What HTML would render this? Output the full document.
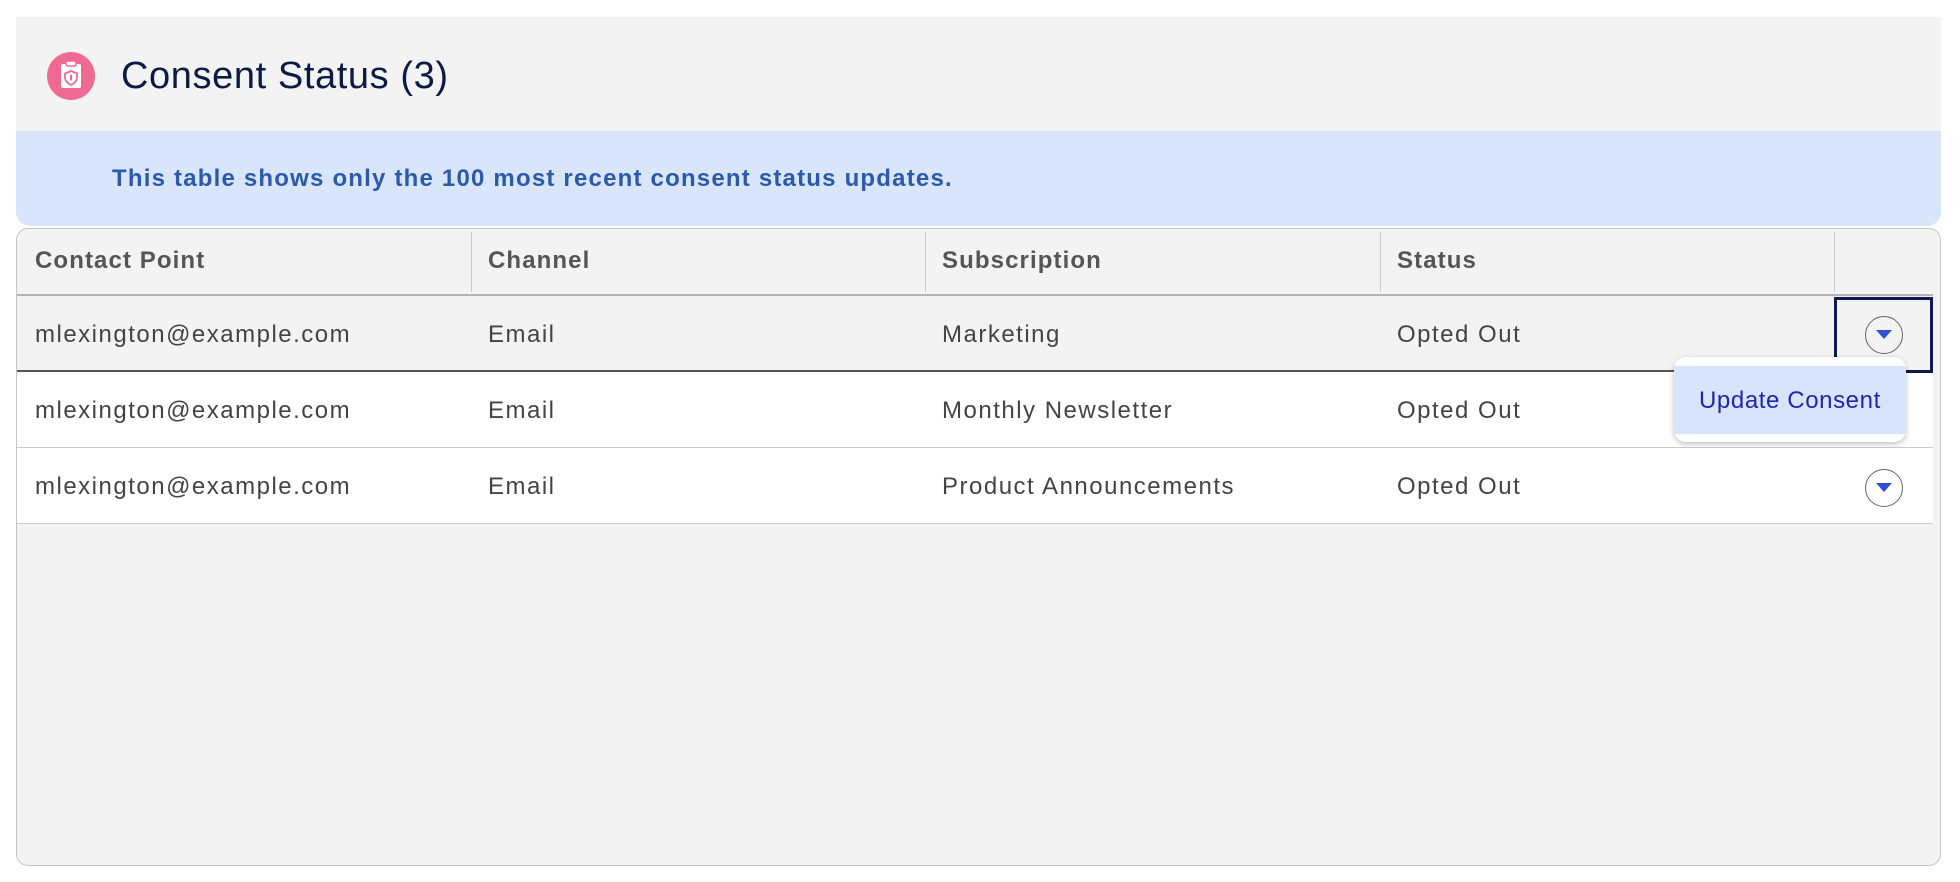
<!DOCTYPE html>
<html><head><meta charset="utf-8"><style>
*{margin:0;padding:0;box-sizing:border-box}
body{width:1960px;height:882px;background:#fff;font-family:"Liberation Sans",sans-serif;position:relative;overflow:hidden}
.abs{position:absolute}
.hdr{left:16px;top:17px;width:1925px;height:114px;background:#f3f3f3}
.title{left:121px;top:52px;font-size:38px;letter-spacing:0.6px;color:#0b1b45;line-height:48px}
.banner{left:16px;top:131px;width:1925px;height:95px;background:#d9e5fb;border-radius:0 0 14px 14px}
.btxt{left:112px;top:165px;font-size:24px;letter-spacing:1.2px;font-weight:bold;color:#2b5aab}
.tbl{left:16px;top:228px;width:1925px;height:638px;background:#f3f3f3;border:1.5px solid #c4c4c4;border-radius:12px}
.th{top:247px;font-size:24px;letter-spacing:1.1px;font-weight:bold;color:#555}
.sep{top:232px;width:1px;height:60px;background:#c9c9c9}
.row{left:17px;width:1916px;height:76px}
.td{font-size:24px;letter-spacing:1.5px;color:#444}
.circ{width:38px;height:38px;border:1.6px solid #666;border-radius:50%}
.circ:after{content:"";position:absolute;left:10px;top:13px;border-left:8px solid transparent;border-right:8px solid transparent;border-top:9px solid #2f4fd8}
</style></head><body>
<div class="abs hdr"></div>
<div class="abs" style="left:47px;top:52px;width:48px;height:48px;border-radius:50%;background:#ef6a93">
<svg width="48" height="48" viewBox="0 0 48 48"><rect x="14" y="12" width="20" height="24" rx="2" fill="#fff"/><rect x="19" y="9" width="10" height="5" rx="1.5" fill="#fff" stroke="#ef6a93" stroke-width="1.5"/><path d="M24 19 l6 2.5 v4 c0 4-3 6-6 7.5 c-3-1.5-6-3.5-6-7.5 v-4z" fill="none" stroke="#ef6a93" stroke-width="1.8"/><path d="M23 23 l2 0 v6 l-2-1.5z" fill="#ef6a93"/></svg></div>
<div class="abs title">Consent Status (3)</div>
<div class="abs banner"></div>
<div class="abs btxt">This table shows only the 100 most recent consent status updates.</div>
<div class="abs tbl"></div>
<div class="abs" style="left:17px;top:294px;width:1916px;height:2px;background:#b3b3b3"></div>
<div class="abs sep" style="left:471px"></div>
<div class="abs sep" style="left:925px"></div>
<div class="abs sep" style="left:1380px"></div>
<div class="abs sep" style="left:1834px"></div>
<div class="abs th" style="left:35px">Contact Point</div>
<div class="abs th" style="left:488px">Channel</div>
<div class="abs th" style="left:942px">Subscription</div>
<div class="abs th" style="left:1397px">Status</div>

<div class="abs row" style="top:296px;background:#f3f3f3;border-bottom:2px solid #555"></div>
<div class="abs row" style="top:372px;background:#fff;border-bottom:1.5px solid #ccc"></div>
<div class="abs row" style="top:448px;background:#fff;border-bottom:1.5px solid #ccc"></div>

<div class="abs td" style="left:35px;top:321px">mlexington@example.com</div>
<div class="abs td" style="left:488px;top:321px">Email</div>
<div class="abs td" style="left:942px;top:321px">Marketing</div>
<div class="abs td" style="left:1397px;top:321px">Opted Out</div>
<div class="abs td" style="left:35px;top:397px">mlexington@example.com</div>
<div class="abs td" style="left:488px;top:397px">Email</div>
<div class="abs td" style="left:942px;top:397px">Monthly Newsletter</div>
<div class="abs td" style="left:1397px;top:397px">Opted Out</div>
<div class="abs td" style="left:35px;top:473px">mlexington@example.com</div>
<div class="abs td" style="left:488px;top:473px">Email</div>
<div class="abs td" style="left:942px;top:473px">Product Announcements</div>
<div class="abs td" style="left:1397px;top:473px">Opted Out</div>

<div class="abs" style="left:1834px;top:297px;width:99px;height:76px;border:3px solid #0b1b50"></div>
<div class="abs circ" style="left:1865px;top:316px"></div>
<div class="abs circ" style="left:1865px;top:469px"></div>

<div class="abs" style="left:1674px;top:357px;width:232px;height:85px;background:#fff;border-radius:12px;box-shadow:0 2px 6px rgba(0,0,0,.25)"></div>
<div class="abs" style="left:1674px;top:366px;width:232px;height:68px;background:#d8e4fb"></div>
<div class="abs" style="left:1699px;top:387px;font-size:24px;letter-spacing:0.6px;color:#2126b0">Update Consent</div>
</body></html>
